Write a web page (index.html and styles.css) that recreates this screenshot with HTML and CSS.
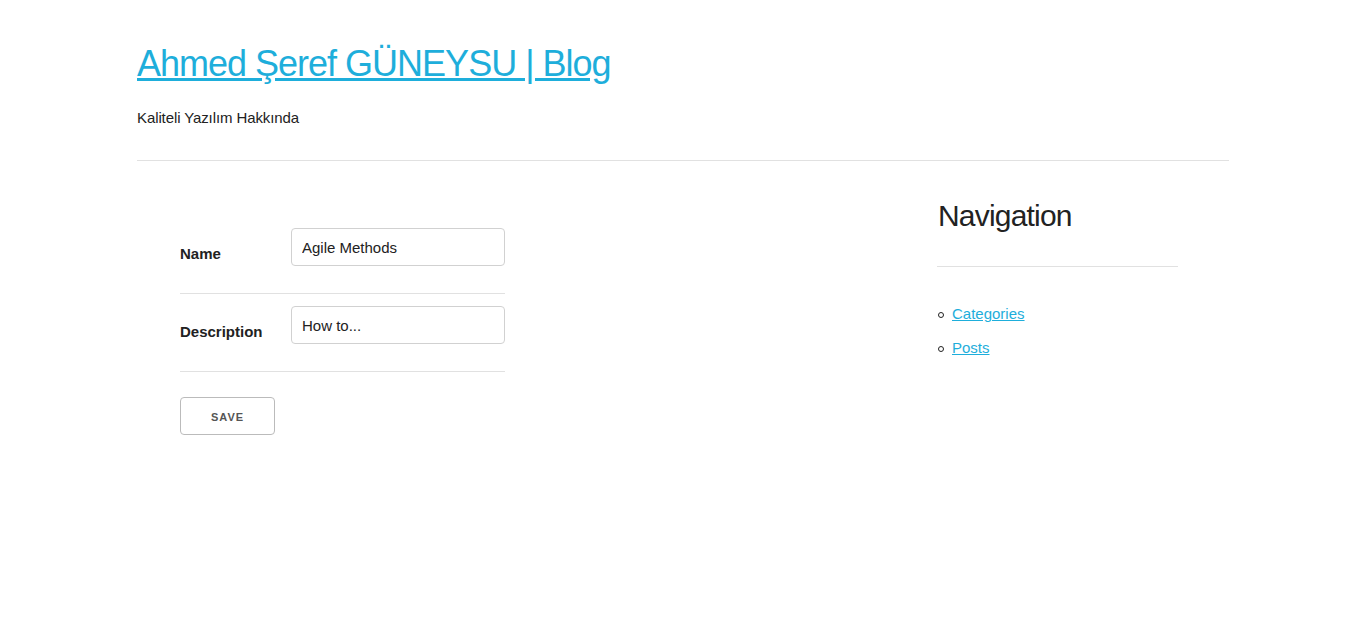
FILE: index.html
```html
<!DOCTYPE html>
<html lang="tr">
<head>
<meta charset="utf-8">
<title>Ahmed Şeref GÜNEYSU | Blog</title>
<link rel="stylesheet" href="styles.css">
</head>
<body>
<div class="container">
  <header class="site-header">
    <h2 class="site-title"><a href="#">Ahmed Şeref GÜNEYSU | Blog</a></h2>
    <p class="tagline">Kaliteli Yazılım Hakkında</p>
  </header>
  <hr class="rule">
  <div class="layout">
    <main class="content">
      <form class="edit-form">
        <table class="form-table">
          <tr>
            <td class="label-cell"><label>Name</label></td>
            <td><input type="text" value="Agile Methods"></td>
          </tr>
          <tr>
            <td class="label-cell"><label>Description</label></td>
            <td><input type="text" value="How to..."></td>
          </tr>
        </table>
        <button type="button" class="button">Save</button>
      </form>
    </main>
    <aside class="sidebar">
      <h3 class="sidebar-title">Navigation</h3>
      <hr class="rule sidebar-rule">
      <ul class="nav-list">
        <li><a href="#">Categories</a></li>
        <li><a href="#">Posts</a></li>
      </ul>
    </aside>
  </div>
</div>
</body>
</html>
```
FILE: styles.css
```css
html, body {
  margin: 0;
  padding: 0;
  background: #fff;
}
body {
  font-family: "Liberation Sans", Arial, sans-serif;
  font-size: 15px;
  line-height: 1.6;
  color: #222;
}
a {
  color: #1eaedb;
}
.container {
  width: 1092px;
  margin: 0 auto;
  padding-top: 41px;
}
.site-title {
  margin: 0 0 20px;
  font-size: 36px;
  line-height: 1.25;
  font-weight: 400;
  letter-spacing: -1px;
}
.tagline {
  margin: 0 0 25px;
  letter-spacing: -0.1px;
}
.rule {
  margin: 30px 0 35px;
  border: 0;
  border-top: 1px solid #e1e1e1;
}
.layout {
  display: flex;
}
.content {
  width: 800px;
}
.edit-form {
  padding: 20px 0 0 43px;
}
.form-table {
  border-collapse: collapse;
  border-spacing: 0;
  margin-bottom: 25px;
}
.form-table td {
  padding: 12px 0;
  border-bottom: 1px solid #e1e1e1;
  vertical-align: middle;
}
.label-cell {
  width: 96px;
}
.form-table td.label-cell {
  padding-right: 15px;
}
label {
  display: block;
  font-weight: 700;
  margin-bottom: 2px;
}
input[type="text"] {
  display: block;
  box-sizing: border-box;
  width: 214px;
  height: 38px;
  padding: 6px 10px;
  margin: 0 0 15px;
  border: 1px solid #d1d1d1;
  border-radius: 4px;
  font-family: inherit;
  font-size: 15px;
  color: #222;
  background: #fff;
}
.button {
  display: block;
  box-sizing: border-box;
  height: 38px;
  width: 95px;
  padding: 0;
  border: 1px solid #bbb;
  border-radius: 4px;
  background: transparent;
  color: #555;
  font-family: inherit;
  font-size: 11px;
  font-weight: 700;
  letter-spacing: 1px;
  text-transform: uppercase;
  line-height: 38px;
}
.sidebar {
  width: 241px;
}
.sidebar-title {
  margin: 0 0 20px;
  padding-left: 1px;
  font-size: 30px;
  line-height: 1.3;
  font-weight: 400;
  letter-spacing: -0.8px;
}
.sidebar-rule {
  margin-top: 31px;
}
.nav-list {
  list-style: none;
  margin: 0;
  padding: 0;
}
.nav-list li {
  display: flex;
  align-items: center;
  margin-bottom: 10px;
  line-height: 24px;
}
.nav-list li::before {
  content: "";
  box-sizing: border-box;
  width: 6px;
  height: 6px;
  margin: 1px 8px 0 1px;
  border: 1px solid #222;
  border-radius: 50%;
}
```
